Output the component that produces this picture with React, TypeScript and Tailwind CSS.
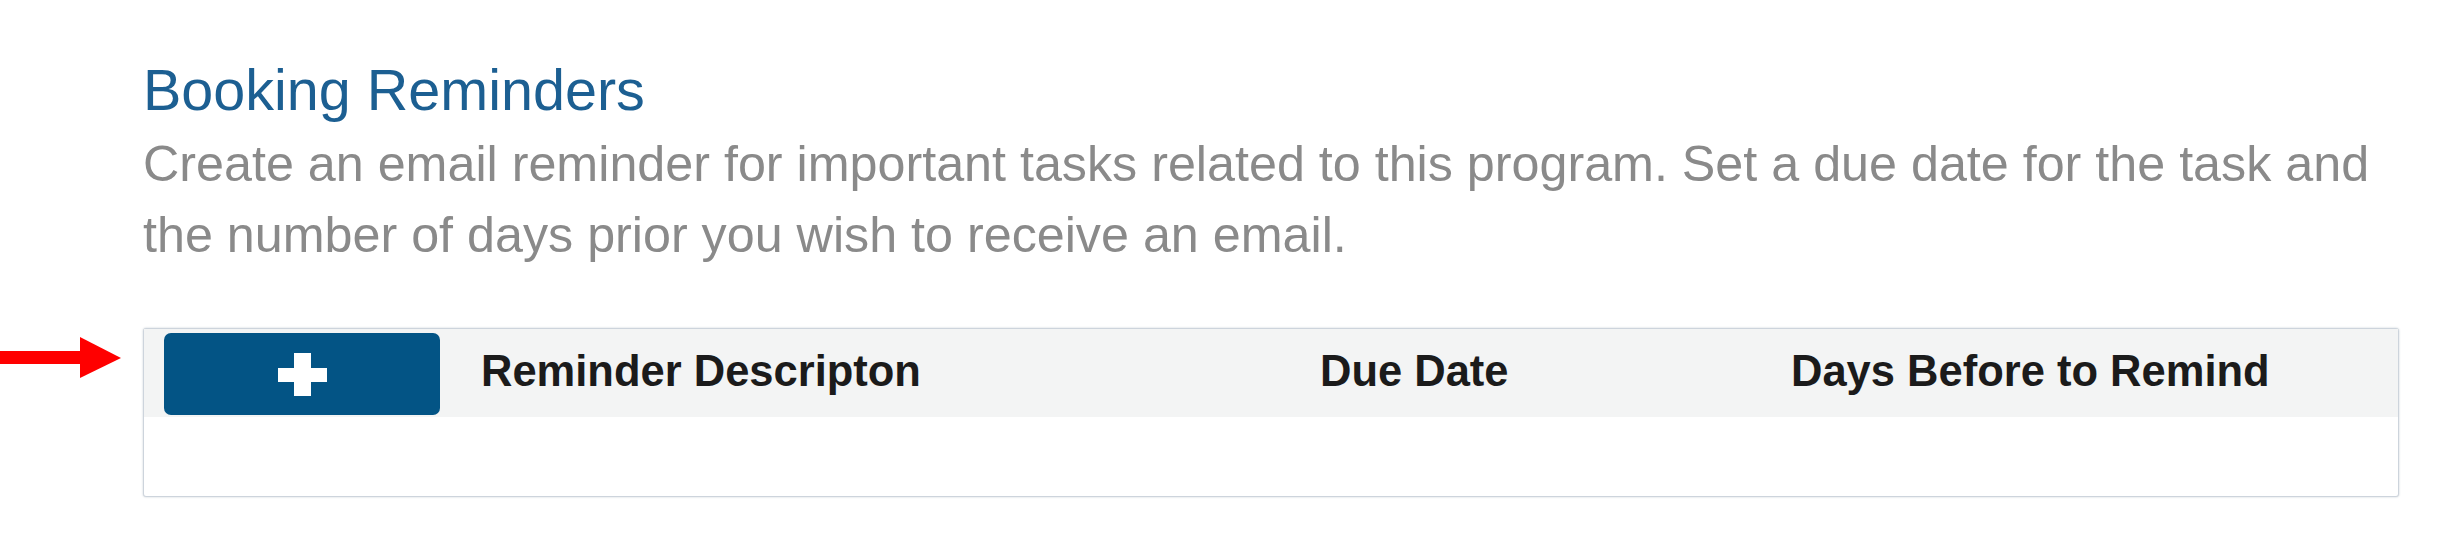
import type { ReactNode } from 'react'

const FONT = "font-['Liberation_Sans',Arial,sans-serif]"

const COLUMNS: { label: string; width: string }[] = [
  { label: 'Reminder Descripton', width: 'w-[839px]' },
  { label: 'Due Date', width: 'w-[471px]' },
  { label: 'Days Before to Remind', width: 'flex-1' },
]

/** The red call-out arrow pointing at the add button. */
function Pointer() {
  return (
    <svg width="122" height="42" viewBox="0 0 122 42" className="shrink-0" aria-hidden="true">
      <rect x="0" y="14" width="81" height="13" fill="#ff0000" />
      <polygon points="80,0 121,21 80,41" fill="#ff0000" />
    </svg>
  )
}

function PlusGlyph() {
  return (
    <svg width="49" height="43" viewBox="0 0 49 43" aria-hidden="true">
      <rect x="0" y="15" width="49" height="14" fill="#fff" />
      <rect x="16" y="0" width="17" height="43" fill="#fff" />
    </svg>
  )
}

function HeaderCell({ children, width }: { children: ReactNode; width: string }) {
  return (
    <div className={`${width} mb-[3px] text-[43.5px] leading-none font-bold text-[#1b1b1b]`}>{children}</div>
  )
}

export default function App() {
  return (
    <div className={`${FONT} relative h-[541px] w-[2445px] overflow-hidden bg-white`}>
      <div className="pt-[58px] pl-[143px]">
        <h2 className="text-[57.5px] leading-[64px] text-[#1c5f92]">Booking Reminders</h2>
        <p className="mt-[7px] w-[2262px] text-[50.25px] leading-[71px] text-[#8a8a8a]">
          Create an email reminder for important tasks related to this program. Set a due date for the task and the
          number of days prior you wish to receive an email.
        </p>

        <div className="mt-[57px] h-[169px] w-[2256px] rounded-[3px] border border-[#cdd4dc] bg-white shadow-[0_0_2px_rgba(120,135,150,0.45)]">
          <div className="flex h-[88px] items-center bg-[#f3f4f4] pl-[20px]">
            <button
              type="button"
              className="mb-[-2px] flex h-[82px] w-[276px] shrink-0 items-center justify-center rounded-[7px] bg-[#035485]"
            >
              <PlusGlyph />
            </button>
            <div className="ml-[41px] flex flex-1 items-center">
              {COLUMNS.map((c) => (
                <HeaderCell key={c.label} width={c.width}>
                  {c.label}
                </HeaderCell>
              ))}
            </div>
          </div>
        </div>
      </div>

      {/* call-out sits over the page margin, left of the table */}
      <div className="absolute top-[337px] left-0">
        <Pointer />
      </div>
    </div>
  )
}
